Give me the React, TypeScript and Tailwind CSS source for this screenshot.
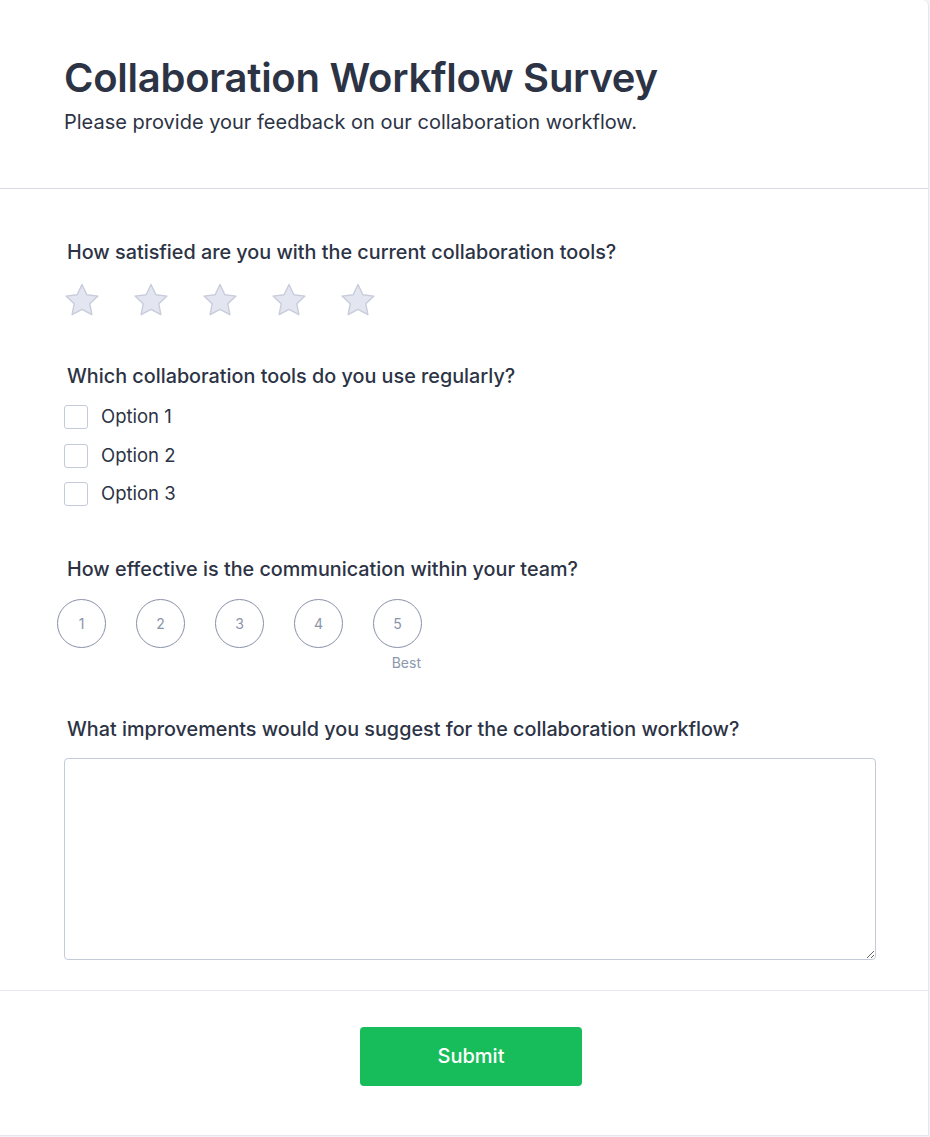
import { useState } from 'react';

const questions = {
  rating: 'How satisfied are you with the current collaboration tools?',
  tools: 'Which collaboration tools do you use regularly?',
  scale: 'How effective is the communication within your team?',
  text: 'What improvements would you suggest for the collaboration workflow?',
};

function Star() {
  return (
    <svg width="38" height="36" viewBox="0 0 24 23" className="block">
      <path
        d="M12 1.6l3.1 6.5 7.1.9-5.2 4.9 1.3 7-6.3-3.4-6.3 3.4 1.3-7L1.8 9l7.1-.9z"
        fill="#e3e6f0"
        stroke="#c8cddb"
        strokeWidth="0.9"
        strokeLinejoin="round"
      />
    </svg>
  );
}

function Label({ children }: { children: React.ReactNode }) {
  return <div className="pl-[3px] text-[19.8px] leading-[28px] font-medium text-[#2c3345]">{children}</div>;
}

export default function App() {
  const [checked, setChecked] = useState<boolean[]>([false, false, false]);

  return (
    <div className="min-h-screen bg-[#f3f3f8] font-['Inter','Liberation_Sans',sans-serif]">
      <div className="w-[929px] bg-white border-r border-b border-[#e6e6ef] rounded-tr-[6px] pb-[49px]">
        {/* Header */}
        <div className="px-[64px] pt-[55px] pb-[52px] border-b border-[#d8d8e6]">
          <h1 className="text-[40px] leading-[45px] font-semibold tracking-[-0.25px] text-[#2c3345]">
            Collaboration Workflow Survey
          </h1>
          <p className="mt-[8px] text-[20px] leading-[28px] text-[#2c3345]">
            Please provide your feedback on our collaboration workflow.
          </p>
        </div>

        {/* Questions */}
        <div className="px-[64px] pt-[49px]">
          <Label>{questions.rating}</Label>
          <div className="mt-[16px] -ml-[1px] flex gap-[31px]">
            {[1, 2, 3, 4, 5].map((n) => (
              <Star key={n} />
            ))}
          </div>

          <div className="mt-[44px]">
            <Label>{questions.tools}</Label>
          </div>
          <div className="mt-[8px] flex flex-col">
            {['Option 1', 'Option 2', 'Option 3'].map((opt, i) => (
              <label key={opt} className="h-[38.5px] flex items-center gap-[13px] cursor-pointer">
                <span
                  onClick={() => setChecked((c) => c.map((v, j) => (j === i ? !v : v)))}
                  className={`w-[24px] h-[24px] rounded-[3px] border border-[#c3cad8] ${checked[i] ? 'bg-[#18bd5b]' : 'bg-white'}`}
                />
                <span className="text-[18.5px] text-[#2c3345]">{opt}</span>
              </label>
            ))}
          </div>

          <div className="mt-[41px]">
            <Label>{questions.scale}</Label>
          </div>
          <div className="mt-[16px] -ml-[7px] flex gap-[30px]">
            {[1, 2, 3, 4, 5].map((n) => (
              <div key={n} className="flex flex-col items-end">
                <div className="w-[49px] h-[49px] rounded-full border border-[#8990a8] flex items-center justify-center text-[14px] text-[#8b94aa]">
                  {n}
                </div>
                {n === 5 && (
                  <span className="mt-[5px] mr-[1px] text-[14px] leading-[20px] text-[#8b97ab]">Best</span>
                )}
              </div>
            ))}
          </div>

          <div className="mt-[42px]">
            <Label>{questions.text}</Label>
          </div>
          <textarea className="mt-[15px] block w-[812px] h-[202px] rounded-[4px] border border-[#c3cad8] bg-white outline-none p-3 text-[16px]" />
        </div>

        <div className="mt-[30px] border-t border-[#e8e8ef]" />

        <div className="pt-[36px] flex justify-center">
          <button className="ml-[14px] w-[222px] h-[59px] rounded-[4px] bg-[#18bd5b] text-white text-[20px] font-medium">
            Submit
          </button>
        </div>
      </div>
    </div>
  );
}
